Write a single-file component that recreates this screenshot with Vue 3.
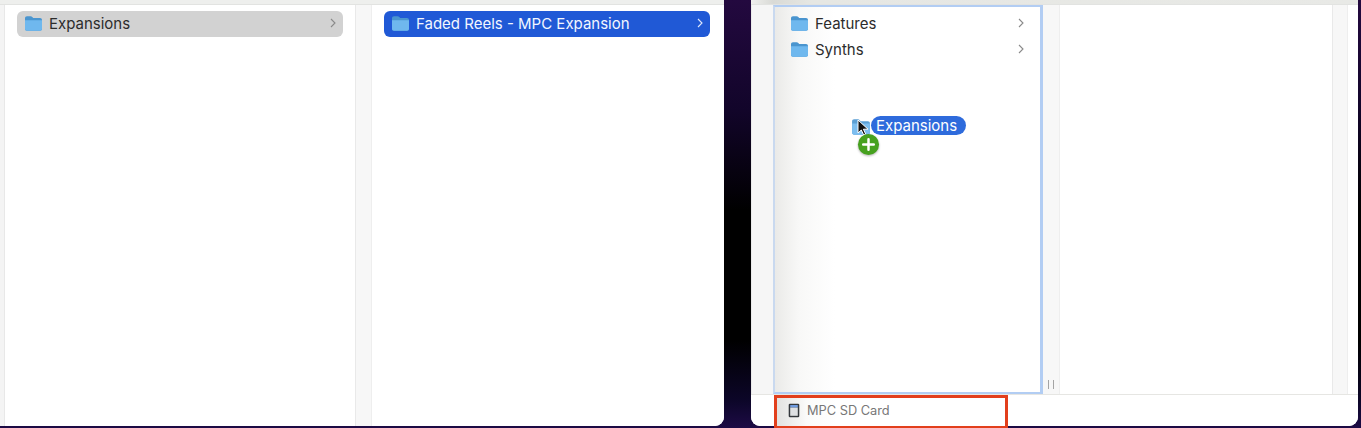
<script setup>
const folderPaths = { tab: 'M1 3.2C1 2 1.8 1.2 3 1.2h3.6c.8 0 1.2.3 1.7.9l.9 1H16c1.2 0 2 .8 2 2v8.7c0 1.2-.8 2-2 2H3c-1.2 0-2-.8-2-2z', front: 'M1 5.2h17v8.6c0 1.2-.8 2-2 2H3c-1.2 0-2-.8-2-2z' }
const rightItems = ['Features', 'Synths']
</script>

<template>
  <div class="desk">
    <section class="win left-win">
      <div class="topstrip"></div>
      <div class="cols">
        <div class="edge"></div>
        <div class="col col-a">
          <div class="row row-grey">
            <svg class="folder" viewBox="0 0 19 17"><path :d="folderPaths.tab" fill="#4a95cf"/><path :d="folderPaths.front" fill="#6fb8ee"/></svg>
            <span class="name">Expansions</span>
            <svg class="chev" viewBox="0 0 6 10"><path d="M1 1l4 4-4 4" fill="none" stroke="#8a8a8a" stroke-width="1.1"/></svg>
          </div>
        </div>
        <div class="gutter first"></div>
        <div class="col col-b">
          <div class="row row-blue">
            <svg class="folder" viewBox="0 0 19 17"><path :d="folderPaths.tab" fill="#4a95cf"/><path :d="folderPaths.front" fill="#6fb8ee"/></svg>
            <span class="name">Faded Reels - MPC Expansion</span>
            <svg class="chev" viewBox="0 0 6 10"><path d="M1 1l4 4-4 4" fill="none" stroke="#dfe8fb" stroke-width="1.1"/></svg>
          </div>
        </div>
      </div>
    </section>

    <section class="win right-win">
      <div class="topstrip tall"></div>
      <div class="cols">
        <div class="lead"></div>
        <div class="focus">
          <div v-for="item in rightItems" :key="item" class="plain">
            <svg class="folder" viewBox="0 0 19 17"><path :d="folderPaths.tab" fill="#4a95cf"/><path :d="folderPaths.front" fill="#6fb8ee"/></svg>
            <span class="name">{{ item }}</span>
            <svg class="chev" viewBox="0 0 6 10"><path d="M1 1l4 4-4 4" fill="none" stroke="#8a8a8a" stroke-width="1.1"/></svg>
          </div>
          <div class="ghost">
            <svg class="ghost-folder" viewBox="0 0 19 17"><path :d="folderPaths.tab" fill="#4a95cf"/><path :d="folderPaths.front" fill="#6fb8ee"/></svg>
            <span class="ghost-label">Expansions</span>
            <svg class="cursor" viewBox="0 0 12 17"><path d="M1 1v13l3.3-3 2.4 5 2-1-2.3-4.8H11z" fill="#111" stroke="#fff" stroke-width="1"/></svg>
            <svg class="plus" viewBox="0 0 24 24"><circle cx="12" cy="12" r="11" fill="#46a11f"/><path d="M12 6.5v11M6.5 12h11" stroke="#fff" stroke-width="2.6" stroke-linecap="round"/></svg>
          </div>
        </div>
        <div class="gutter wide">
          <span class="grip"></span>
        </div>
        <div class="col col-c"></div>
        <div class="gutter"></div>
        <div class="col-d"></div>
      </div>
      <footer class="pathbar">
        <div class="crumb">
          <svg class="card" viewBox="0 0 12 15"><rect x=".7" y=".7" width="10.6" height="13.6" rx="1.3" fill="#34383c" /><rect x="2.2" y="2" width="7.6" height="2.6" fill="#6f9be0"/><rect x="2.2" y="4.6" width="7.6" height="8.2" fill="#dfe1e3"/></svg>
          <span>MPC SD Card</span>
        </div>
      </footer>
    </section>
  </div>
</template>

<style>
html, body { margin: 0; background: #000; overflow: hidden; }
</style>

<style scoped>
.desk {
  width: 1361px;
  height: 428px;
  box-sizing: border-box;
  padding: 0 3px 2px 0;
  display: flex;
  gap: 27px;
  overflow: hidden;
  background:
    linear-gradient(180deg, #23093f 0, #12052a 110px, #000 210px, #000 340px, #0c0628 400px, #1d0b45 100%);
  font-family: Inter, "Liberation Sans", sans-serif;
}
.win {
  background: #fff;
  display: flex;
  flex-direction: column;
  border-radius: 0 0 9px 9px;
  overflow: hidden;
}
.left-win { width: 724px; border-bottom-left-radius: 0; }
.right-win { width: 607px; position: relative; overflow: visible; }
.topstrip { height: 4px; background: #eeefed; border-bottom: 1px solid #e2e3e1; flex: none; }
.topstrip.tall { background: linear-gradient(90deg, #f0f0ee 0, #d9dad6 22px, #e6e7e3 60px, #e8e9e6 100%); }
.cols { flex: 1; min-height: 0; display: flex; }
.edge { width: 4px; background: #f4f4f4; border-right: 1px solid #e8e8e8; flex: none; }
.col { background: #fff; }
.col-a { width: 350px; padding: 6px 12px 0; box-sizing: border-box; }
.col-b { width: 352px; padding: 6px 14px 0 12px; box-sizing: border-box; }
.gutter { width: 16px; flex: none; background: #f7f7f7; border-left: 1px solid #e9e9e9; border-right: 1px solid #eeeeee; box-sizing: border-box; }
.gutter.first { width: 17px; }
.gutter.wide { width: 17px; display: flex; align-items: flex-end; justify-content: center; padding-bottom: 5px; border-left: 0; }
.grip { width: 6px; height: 9px; border-left: 1px solid #a4a4a4; border-right: 1px solid #a4a4a4; box-sizing: border-box; }
.row {
  height: 26px;
  border-radius: 6px;
  display: flex;
  align-items: center;
  padding: 0 7px 2px 7px;
  box-sizing: border-box;
  font-size: 15px;
}
.row-grey { background: #d2d2d2; color: #2c2c2c; }
.row-blue { background: #2059d6; color: #f2f6ff; }
.folder { width: 19px; height: 17px; flex: none; }
.name { margin-left: 6px; flex: 1; white-space: nowrap; }
.chev { width: 6px; height: 10px; flex: none; }
.lead { width: 22px; flex: none; background: #f6f6f6; border-left: 1px solid #eaeaea; box-sizing: border-box; }
.focus {
  width: 270px;
  flex: none;
  box-sizing: border-box;
  border: 2px solid #b2cdf3;
  border-right-width: 3px;
  border-left-color: #c9d9ef;
  position: relative;
  padding-top: 3px;
  background: linear-gradient(90deg, #eaeae8 0, #f8f8f7 24px, #fff 60px);
}
.plain {
  height: 26px;
  display: flex;
  align-items: center;
  padding: 0 16px 0 15px;
  font-size: 15px;
  color: #2c2c2c;
}
.ghost { position: absolute; left: 76px; top: 108px; width: 118px; height: 44px; }
.ghost-folder { position: absolute; left: 0; top: 3px; width: 20px; height: 18px; opacity: .9; }
.ghost-label {
  position: absolute;
  left: 20px;
  top: 1px;
  height: 19px;
  line-height: 19px;
  padding: 0 9px 0 5px;
  border-radius: 10px;
  background: #2e6bdc;
  color: #fff;
  font-size: 15px;
}
.cursor { position: absolute; left: 6px; top: 4px; width: 12px; height: 17px; }
.plus { position: absolute; left: 6px; top: 18px; width: 23px; height: 23px; filter: drop-shadow(0 1px 1px rgba(0,0,0,.3)); }
.col-c { width: 272px; flex: none; }
.col-d { flex: 1; }
.pathbar {
  height: 32px;
  flex: none;
  border-top: 1px solid #e6e6e3;
  box-sizing: border-box;
  display: flex;
  position: relative;
  background: #fff;
  border-radius: 0 0 9px 9px;
}
.crumb {
  position: absolute;
  left: 23px;
  top: 0;
  width: 234px;
  height: 34px;
  box-sizing: border-box;
  border: 3px solid #e23f1c;
  display: flex;
  align-items: center;
  padding: 0 0 3px 11px;
  gap: 7px;
  font-size: 12.8px;
  color: #777;
  background: linear-gradient(90deg, #e2e2e0 0, #fbfbfa 30px, #fff 60px);
}
.card { width: 12px; height: 15px; flex: none; }
</style>
